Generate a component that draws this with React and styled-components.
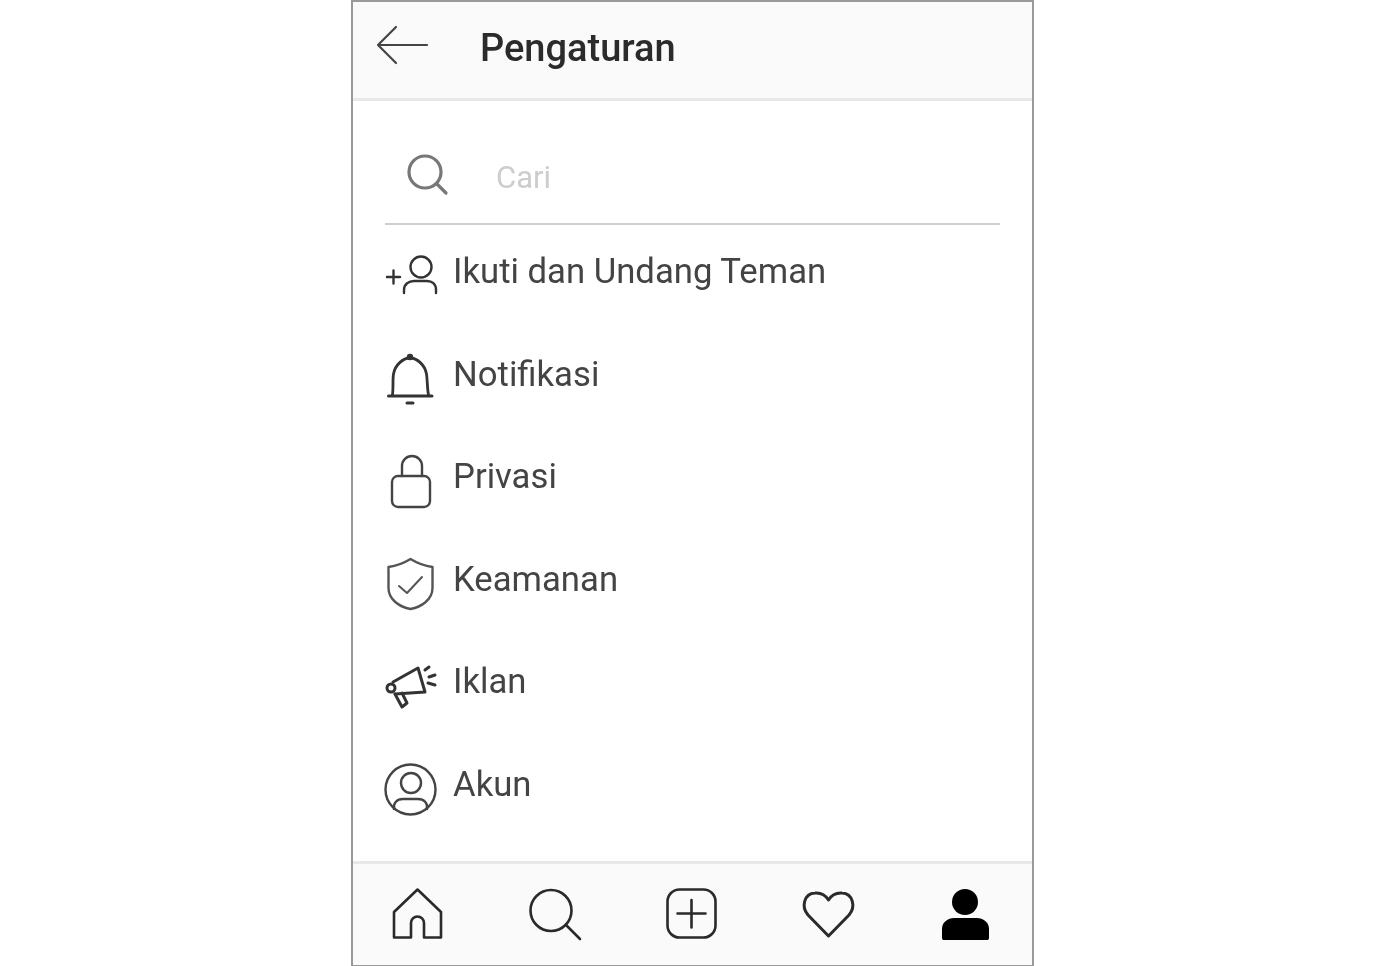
import React from 'react';
import styled, { createGlobalStyle } from 'styled-components';

const GlobalStyle = createGlobalStyle`
    html, body {
        margin: 0;
        padding: 0;
        background: #fff;
        overflow: hidden;
    }
`;

const Phone = styled.div`
    width: 683px;
    height: 966px;
    margin: 0 auto;
    box-sizing: border-box;
    border: 2px solid #999;
    border-bottom-width: 1px;
    display: flex;
    flex-direction: column;
    background: #fff;
    font-family: Roboto, "Liberation Sans", sans-serif;
    filter: blur(0.7px);
`;

const Header = styled.header`
    height: 99px;
    box-sizing: border-box;
    display: flex;
    align-items: center;
    padding: 0 0 5px 22px;
    background: #fafafa;
    border-bottom: 3px solid #e8e8e8;
`;

const BackIcon = styled.svg`
    width: 56px;
    height: 44px;
    flex: none;
    margin-bottom: 5px;
`;

const Title = styled.h1`
    margin: 0 0 0 49px;
    font-size: 38px;
    font-weight: 500;
    color: #2b2b2b;
`;

const Search = styled.div`
    height: 124px;
    box-sizing: border-box;
    margin: 0 32px;
    padding: 32px 0 0 22px;
    display: flex;
    align-items: center;
    border-bottom: 2px solid #cfcfcf;
    width: 615px;
`;

const SearchIcon = styled.svg`
    width: 44px;
    height: 44px;
    flex: none;
    margin-bottom: 4px;
`;

const Placeholder = styled.span`
    margin: 0 0 2px 45px;
    font-size: 31px;
    color: #cdcdcd;
`;

const Menu = styled.ul`
    list-style: none;
    margin: 0;
    padding: 17px 0 0 32px;
    flex: 1;
    display: flex;
    flex-direction: column;
    gap: 42.5px;
`;

const Row = styled.li`
    height: 60px;
    display: flex;
    align-items: center;
    gap: 16px;
`;

const RowIcon = styled.svg`
    width: 52px;
    height: 60px;
    flex: none;
    overflow: visible;
    fill: none;
    stroke: ${p => p.$tone || '#333'};
    stroke-width: 2.4;
    stroke-linecap: round;
    stroke-linejoin: round;
`;

const RowLabel = styled.span`
    margin-bottom: 1.5px;
    font-size: 34.7px;
    color: #444;
`;

const BottomNav = styled.nav`
    height: 104px;
    box-sizing: border-box;
    display: flex;
    justify-content: center;
    align-items: flex-start;
    gap: 81px;
    padding: 21px 4px 0 0;
    background: #fafafa;
    border-top: 3px solid #e8e8e8;
`;

const NavIcon = styled.svg`
    width: 56px;
    height: 56px;
    flex: none;
    overflow: visible;
    fill: none;
    stroke: #2a2a2a;
    stroke-width: 2.6;
    stroke-linecap: round;
    stroke-linejoin: round;
`;

const rows = [
    {
        label: 'Ikuti dan Undang Teman',
        icon: (
            <>
                <path d="M2 35 H15 M8.5 28.5 V41.5" />
                <circle cx="36" cy="25" r="10.5" />
                <path d="M19 51 V48 C19 42 24 39 29 39 H42 C47 39 51 42 51 48 V51" />
            </>
        ),
    },
    {
        label: 'Notifikasi',
        icon: (
            <>
                <path d="M3.5 51 H47" strokeWidth="3" />
                <path d="M7.5 50 C8.5 42 7.5 35 8.5 29 C10 20 18 13 25 13 C32 13 40 20 41.5 29 C42.5 35 42 42 43.5 50" strokeWidth="2.8" />
                <circle cx="25" cy="12" r="2" fill="#333" />
                <path d="M22 58 H28" strokeWidth="3" />
            </>
        ),
    },
    {
        label: 'Privasi',
        tone: '#444',
        icon: (
            <>
                <rect x="7" y="29" width="38" height="31" rx="6" />
                <path d="M17 29 V19 A10 10 0 0 1 37 19 V29" />
            </>
        ),
    },
    {
        label: 'Keamanan',
        tone: '#555',
        icon: (
            <>
                <path d="M25.5 9 C32 13 40 16 47.5 17 V38 C47.5 50 36 57 25.5 59 C15 57 3.5 50 3.5 38 V17 C11 16 19 13 25.5 9 Z" />
                <path d="M14 36 L22 43 L37 27" strokeWidth="2" />
            </>
        ),
    },
    {
        label: 'Iklan',
        icon: (
            <>
                <path d="M8 30 L33 16 L40 40 L10 42" strokeWidth="3" />
                <circle cx="6" cy="36" r="4" strokeWidth="3" />
                <path d="M10 42 L17 55 L22 51 L17 41" strokeWidth="3" />
                <path d="M40 18 L44 15 M44 25 L50 23 M43 31 L50 33" strokeWidth="3" />
            </>
        ),
    },
    {
        label: 'Akun',
        tone: '#444',
        icon: (
            <>
                <circle cx="25.5" cy="34.5" r="25" />
                <circle cx="26" cy="28" r="10" />
                <path d="M9 54 C8 48 12 44 18 44 H33 C39 44 43 48 42 54" />
            </>
        ),
    },
];

export default function App() {
    return (
        <>
            <GlobalStyle />
            <Phone>
                <Header>
                    <BackIcon viewBox="0 0 56 44" fill="none" stroke="#444" strokeWidth="2.2" strokeLinecap="round" strokeLinejoin="round">
                        <path d="M3 22 H52 M21 4 L3 22 L21 40" />
                    </BackIcon>
                    <Title>Pengaturan</Title>
                </Header>
                <Search>
                    <SearchIcon viewBox="0 0 44 44" fill="none" stroke="#777" strokeWidth="3.2" strokeLinecap="round">
                        <circle cx="18" cy="18" r="16" />
                        <path d="M30 30 L39 39" />
                    </SearchIcon>
                    <Placeholder>Cari</Placeholder>
                </Search>
                <Menu>
                    {rows.map(row => (
                        <Row key={row.label}>
                            <RowIcon viewBox="0 0 52 60" $tone={row.tone}>{row.icon}</RowIcon>
                            <RowLabel>{row.label}</RowLabel>
                        </Row>
                    ))}
                </Menu>
                <BottomNav>
                    <NavIcon viewBox="0 0 56 56">
                        <path d="M28.5 4.5 L5 27 V52.5 H22 V38 A6.5 6.5 0 0 1 35 38 V52.5 H52 V27 Z" />
                    </NavIcon>
                    <NavIcon viewBox="0 0 56 56">
                        <circle cx="25" cy="25.5" r="20.5" />
                        <path d="M40 40 L54 54" />
                    </NavIcon>
                    <NavIcon viewBox="0 0 56 56">
                        <rect x="4.5" y="4.5" width="48" height="48" rx="12" />
                        <path d="M14.5 28.5 H42.5 M28.5 15 V42.5" />
                    </NavIcon>
                    <NavIcon viewBox="0 0 56 56">
                        <path d="M28.5 51 L8 30 C1 22 4 8.5 15 8 C21 7.5 26 11 28.5 15 C31 11 36 7.5 42 8 C53 8.5 56 22 49 30 Z" strokeWidth="3" />
                    </NavIcon>
                    <NavIcon viewBox="0 0 56 56">
                        <circle cx="28" cy="17" r="13" fill="#000" stroke="none" />
                        <path d="M5 53 V44 C5 37 11 33 17 33 H40 C46 33 52 37 52 44 V53 C52 54.5 51 55 50 55 H7 C6 55 5 54.5 5 53 Z" fill="#000" stroke="none" />
                    </NavIcon>
                </BottomNav>
            </Phone>
        </>
    );
}
